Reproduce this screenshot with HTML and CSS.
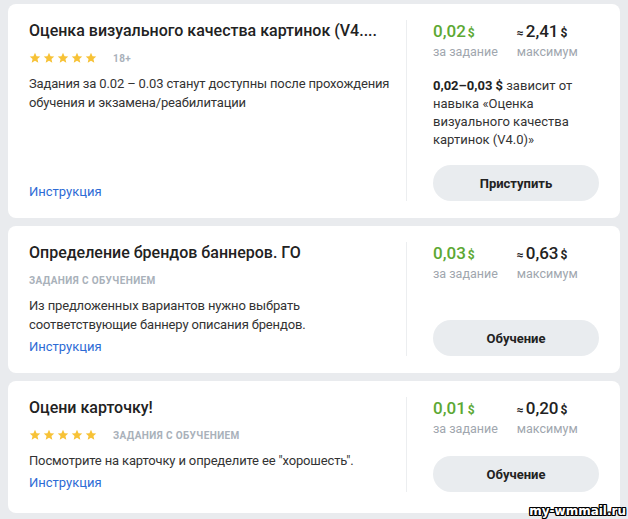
FILE: index.html
```html
<!DOCTYPE html>
<html lang="ru">
<head>
    <meta charset="UTF-8">
    <title>Задания</title>
    <link rel="stylesheet" href="styles.css">
</head>
<body>
<svg width="0" height="0" class="sprite">
    <symbol id="star" viewBox="0 0 24 24">
        <path d="M12 1.5l3.1 6.9 7.4.7-5.6 5 1.7 7.4L12 17.6l-6.6 3.9 1.7-7.4-5.6-5 7.4-.7z"/>
    </symbol>
</svg>

<div class="tasks">
    <!-- карточка 1 -->
    <div class="task">
        <div class="task-main">
            <h2 class="task-title">Оценка визуального качества картинок (V4....</h2>
            <div class="task-meta">
                <span class="stars">
                    <svg><use href="#star"/></svg><svg><use href="#star"/></svg><svg><use href="#star"/></svg><svg><use href="#star"/></svg><svg><use href="#star"/></svg>
                </span>
                <span class="tag">18+</span>
            </div>
            <p class="task-desc">Задания за 0.02 – 0.03 станут доступны после прохождения обучения и экзамена/реабилитации</p>
            <a href="#" class="task-link">Инструкция</a>
        </div>
        <div class="task-side">
            <div class="prices">
                <div class="price green">0,02<span class="cur">$</span></div>
                <div class="price"><span class="approx">≈</span>2,41<span class="cur">$</span></div>
                <div class="price-label">за задание</div>
                <div class="price-label">максимум</div>
            </div>
            <p class="note"><b>0,02–0,03 $</b> зависит от навыка «Оценка визуального качества картинок (V4.0)»</p>
            <button class="task-button">Приступить</button>
        </div>
    </div>

    <!-- карточка 2 -->
    <div class="task">
        <div class="task-main">
            <h2 class="task-title">Определение брендов баннеров. ГО</h2>
            <div class="task-meta">
                <span class="tag">Задания с обучением</span>
            </div>
            <p class="task-desc">Из предложенных вариантов нужно выбрать соответствующие баннеру описания брендов.</p>
            <a href="#" class="task-link">Инструкция</a>
        </div>
        <div class="task-side">
            <div class="prices">
                <div class="price green">0,03<span class="cur">$</span></div>
                <div class="price"><span class="approx">≈</span>0,63<span class="cur">$</span></div>
                <div class="price-label">за задание</div>
                <div class="price-label">максимум</div>
            </div>
            <button class="task-button">Обучение</button>
        </div>
    </div>

    <!-- карточка 3 -->
    <div class="task">
        <div class="task-main">
            <h2 class="task-title">Оцени карточку!</h2>
            <div class="task-meta">
                <span class="stars">
                    <svg><use href="#star"/></svg><svg><use href="#star"/></svg><svg><use href="#star"/></svg><svg><use href="#star"/></svg><svg><use href="#star"/></svg>
                </span>
                <span class="tag">Задания с обучением</span>
            </div>
            <p class="task-desc">Посмотрите на карточку и определите ее "хорошесть".</p>
            <a href="#" class="task-link">Инструкция</a>
        </div>
        <div class="task-side">
            <div class="prices">
                <div class="price green">0,01<span class="cur">$</span></div>
                <div class="price"><span class="approx">≈</span>0,20<span class="cur">$</span></div>
                <div class="price-label">за задание</div>
                <div class="price-label">максимум</div>
            </div>
            <button class="task-button">Обучение</button>
        </div>
    </div>
</div>

<div class="watermark">my-wmmail.ru</div>
</body>
</html>
```

FILE: styles.css
```css
body {
    margin: 0;
    background-color: #e9ebee;
    font-family: Roboto, "Noto Sans", Arial, sans-serif;
    color: #222;
}

.sprite {
    position: absolute;
}

.tasks {
    display: flex;
    flex-direction: column;
    gap: 8px;
    padding: 4px 8px 0;
}

.task {
    display: flex;
    padding: 16px 0 17px;
    background-color: #fff;
    border-radius: 8px;
}

.task:last-child {
    padding-bottom: 21px;
}

.task-main {
    flex: 1;
    min-width: 0;
    display: flex;
    flex-direction: column;
    padding: 0 10px 0 21px;
}

.task-title {
    margin: 0;
    font-size: 16px;
    font-weight: 500;
    line-height: 22px;
    white-space: nowrap;
    overflow: hidden;
}

.task-meta {
    display: flex;
    align-items: center;
    gap: 16px;
    height: 16px;
    margin-top: 8px;
}

.stars {
    display: flex;
    gap: 2px;
}

.stars svg {
    width: 12px;
    height: 12px;
    fill: #f7c236;
}

.tag {
    font-size: 10px;
    font-weight: 700;
    color: #a9b1ba;
    text-transform: uppercase;
    letter-spacing: 0.4px;
}

.task-desc {
    margin: 8px 0 4px;
    font-size: 13px;
    line-height: 19px;
    letter-spacing: -0.15px;
    color: #333;
}

.task-link {
    margin-top: auto;
    font-size: 13px;
    line-height: 18px;
    color: #2d6bd5;
    text-decoration: none;
}

.task-side {
    width: 214px;
    box-sizing: border-box;
    display: flex;
    flex-direction: column;
    padding: 1px 21px 0 26px;
    border-left: 1px solid #eceef0;
}

.prices {
    display: grid;
    grid-template-columns: auto auto;
    justify-content: start;
    column-gap: 19px;
}

.price {
    font-size: 17px;
    font-weight: 500;
    line-height: 20px;
}

.price.green {
    color: #5ca833;
}

.price .cur {
    font-size: 12px;
    font-weight: 700;
    margin-left: 2px;
}

.price .approx {
    font-size: 12px;
    font-weight: 700;
    margin-right: 2px;
}

.price-label {
    font-size: 12.5px;
    line-height: 18px;
    color: #a0a6ae;
}

.note {
    width: 150px;
    margin: 16px 0;
    font-size: 13px;
    line-height: 18px;
    color: #333;
}

.note b {
    color: #222;
}

.task-button {
    margin-top: auto;
    height: 36px;
    border: none;
    border-radius: 18px;
    background-color: #e9ecef;
    font-family: inherit;
    font-size: 13px;
    font-weight: 700;
    color: #222;
    cursor: pointer;
}

.watermark {
    position: absolute;
    right: 2px;
    bottom: 1px;
    font-family: "DejaVu Sans", sans-serif;
    font-size: 12px;
    font-weight: 700;
    line-height: 13px;
    color: #fff;
    text-shadow: -1px -1px 0 #000, 1px -1px 0 #000, -1px 1px 0 #000, 1px 1px 0 #000, 0 1px 0 #000, 0 -1px 0 #000, 1px 0 0 #000, -1px 0 0 #000;
}
```
